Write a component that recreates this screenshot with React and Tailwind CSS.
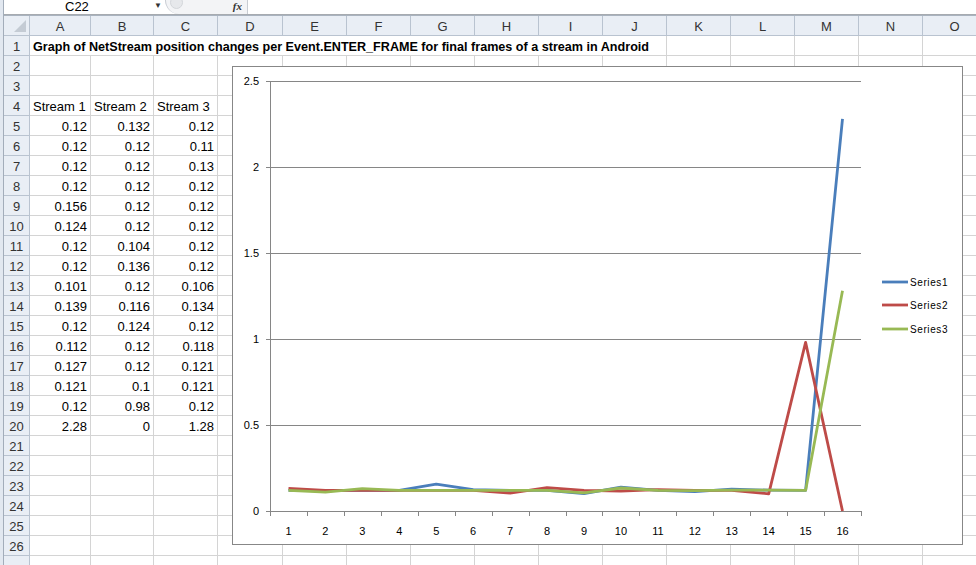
import React from 'react'

const COLS = ['A', 'B', 'C', 'D', 'E', 'F', 'G', 'H', 'I', 'J', 'K', 'L', 'M', 'N', 'O']

const s1 = [0.12, 0.12, 0.12, 0.12, 0.156, 0.124, 0.12, 0.12, 0.101, 0.139, 0.12, 0.112, 0.127, 0.121, 0.12, 2.28]
const s2 = [0.132, 0.12, 0.12, 0.12, 0.12, 0.12, 0.104, 0.136, 0.12, 0.116, 0.124, 0.12, 0.12, 0.1, 0.98, 0]
const s3 = [0.12, 0.11, 0.13, 0.12, 0.12, 0.12, 0.12, 0.12, 0.106, 0.134, 0.12, 0.118, 0.121, 0.121, 0.12, 1.28]

const gridCols = 'grid grid-cols-[26px_61px_63px_64px_65px_repeat(11,64px)]'

function Cell({ children, right }) {
  return (
    <div className={`h-[20px] border-r border-b border-[#d4d4d4] px-[3px] pt-[2px] leading-[18px] whitespace-nowrap overflow-hidden ${right ? 'text-right' : ''}`}>
      {children}
    </div>
  )
}

function RowHead({ n }) {
  return (
    <div className="h-[20px] bg-[#e9eef5] border-r border-b border-[#b9c3d0] text-center pt-[2px] leading-[18px] text-[#333] overflow-hidden">{n}</div>
  )
}

function Chart() {
  const x0 = 37, x1 = 628, y0 = 444, k = 172
  const cw = (x1 - x0) / 16
  const px = i => x0 + cw * (i + 0.5)
  const py = v => y0 - v * k
  const pts = s => s.map((v, i) => `${px(i).toFixed(1)},${py(v).toFixed(1)}`).join(' ')
  const grid = [0, 0.5, 1, 1.5, 2, 2.5]
  return (
    <div className="absolute left-[232px] top-[66px] w-[731px] h-[479px] bg-white border border-[#878787]">
      <svg width="729" height="477" className="block" style={{ fontFamily: '"Liberation Sans", Arial, sans-serif' }}>
        {grid.map(g => (
          <g key={g}>
            <line x1={33} x2={x1} y1={py(g) + 0.5} y2={py(g) + 0.5} stroke="#868686" strokeWidth="1" />
            <text x={26} y={py(g) + 4} textAnchor="end" fontSize="11" fill="#000">{g}</text>
          </g>
        ))}
        <line x1={x0 + 0.5} x2={x0 + 0.5} y1={py(2.5)} y2={y0} stroke="#868686" />
        {Array.from({ length: 17 }).map((_, i) => (
          <line key={i} x1={Math.round(x0 + cw * i) + 0.5} x2={Math.round(x0 + cw * i) + 0.5} y1={y0} y2={y0 + 5} stroke="#868686" />
        ))}
        {s1.map((_, i) => (
          <text key={i} x={px(i)} y={468} textAnchor="middle" fontSize="11" fill="#000">{i + 1}</text>
        ))}
        <polyline points={pts(s1)} fill="none" stroke="#4a7ebb" strokeWidth="2.8" strokeLinejoin="round" />
        <polyline points={pts(s2)} fill="none" stroke="#be4b48" strokeWidth="2.8" strokeLinejoin="round" />
        <polyline points={pts(s3)} fill="none" stroke="#98b954" strokeWidth="2.8" strokeLinejoin="round" />
        {[['Series1', '#4a7ebb', 215], ['Series2', '#be4b48', 238], ['Series3', '#98b954', 262]].map(([n, c, y]) => (
          <g key={n}>
            <line x1={649} x2={675} y1={y} y2={y} stroke={c} strokeWidth="2.8" />
            <text x={677} y={y + 3.5} fontSize="10" letterSpacing="0.6" fill="#000">{n}</text>
          </g>
        ))}
      </svg>
    </div>
  )
}

export default function App() {
  const rows = []
  for (let r = 2; r <= 27; r++) {
    let vals = ['', '', '']
    if (r === 4) vals = ['Stream 1', 'Stream 2', 'Stream 3']
    if (r >= 5 && r <= 20) vals = [s1[r - 5], s2[r - 5], s3[r - 5]]
    rows.push(
      <div key={r} className={gridCols}>
        {/* row 27 only peeks in at the bottom edge, its number isn't visible */}
        <RowHead n={r < 27 ? r : ''} />
        {COLS.map((c, i) => (
          <Cell key={c} right={r >= 5 && i < 3}>{i < 3 ? vals[i] : ''}</Cell>
        ))}
      </div>
    )
  }

  return (
    <div className="relative w-[976px] h-[565px] overflow-hidden bg-white flex text-[13px] text-black" style={{ fontFamily: '"Liberation Sans", Arial, sans-serif' }}>
      {/* window frame */}
      <div className="w-[4px] shrink-0 bg-[#e2e8f0] border-r border-[#a3adba]" />
      <div className="flex-1 flex flex-col min-w-0">
        {/* formula bar */}
        <div className="h-[15px] flex items-stretch border-b border-[#a7abb0] text-[13px]">
          <div className="w-[161px] relative flex items-center pl-[61px] leading-none -mt-[2px]">
            C22
            <span className="absolute right-[3px] top-[4px] text-[8px] text-[#333]">▼</span>
          </div>
          <div className="w-[83px] flex items-center justify-end pr-[5px] border-r border-[#a7abb0] bg-[#f3f4f6] rounded-bl-[16px] border-l border-[#c8ccd2] relative">
            <span className="absolute left-[4px] top-[-4px] w-[13px] h-[13px] rounded-full bg-[#e6e8eb] border border-[#d3d6da]" />
            <span className="italic font-bold text-[11px] font-['Liberation_Serif'] text-[#333] -mt-[2px]">fx</span>
          </div>
          <div className="flex-1 bg-white" />
        </div>
        <div className="h-[3px] bg-[#eef1f5] border-b border-[#a9b3bf]" />
        {/* column headers */}
        <div className={gridCols}>
          <div className="h-[20px] bg-[#e9eef5] border-r border-b border-[#b9c3d0] relative">
            <svg width="12" height="12" className="absolute right-[3px] bottom-[3px]">
              <polygon points="12,0 12,12 0,12" fill="#c4cbd4" />
            </svg>
          </div>
          {COLS.map(c => (
            <div key={c} className="h-[20px] bg-[#e9eef5] border-r border-b border-[#b9c3d0] text-center pt-[2px] leading-[18px] text-[#333]">{c}</div>
          ))}
        </div>
        {/* row 1 */}
        <div className={gridCols}>
          <RowHead n={1} />
          <div className="col-span-10 h-[20px] border-r border-b border-[#d4d4d4] px-[3px] pt-[2px] leading-[18px] text-[12.6px] font-bold whitespace-nowrap overflow-hidden">
            Graph of NetStream position changes per Event.ENTER_FRAME for final frames of a stream in Android
          </div>
          {COLS.slice(10).map(c => <Cell key={c} />)}
        </div>
        {rows}
      </div>
      <Chart />
    </div>
  )
}
